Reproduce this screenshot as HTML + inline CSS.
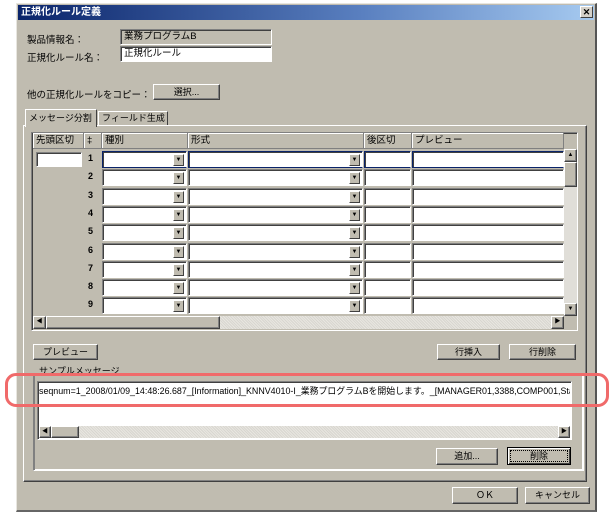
<!DOCTYPE html>
<html><head><meta charset="utf-8"><style>
*{margin:0;padding:0;box-sizing:border-box}
body{width:612px;height:514px;background:#fff;position:relative;overflow:hidden;font-family:"Liberation Sans","Noto Sans CJK JP",sans-serif;font-size:9.5px;color:#000}
.a{position:absolute;white-space:nowrap}
.win{left:16px;top:3px;width:581px;height:509px;background:#c0bcb0;border-left:1px solid #e8e6e0;border-top:1px solid #e8e6e0;border-right:2px solid #555;border-bottom:2px solid #666}
.title{left:18px;top:5px;width:576px;height:15px;background:linear-gradient(90deg,#0a246a,#5a80c0 60%,#a6caf0);color:#fff;font-weight:bold;font-size:10px;line-height:15px;padding-left:3px}
.xb{left:580px;top:6px;width:13px;height:12px;background:#d4d0c8;border:1px solid;border-color:#fff #404040 #404040 #fff;font-size:9px;line-height:10px;text-align:center;font-weight:bold}
.sunk{border:1px solid;border-color:#808080 #fff #fff #808080;box-shadow:inset 1px 1px 0 #404040}
.btn{background:#c0bcb0;border:1px solid;border-color:#fff #404040 #404040 #fff;box-shadow:inset -1px -1px 0 #808080;text-align:center;font-size:9px;line-height:14px}
.wh{background:#fff}
.hd{background:#c0bcb0;border-right:1px solid #808080;border-bottom:1px solid #808080;box-shadow:inset 1px 1px 0 #fff;padding-left:3px;line-height:15px;font-size:9.5px}
.dd{width:11px;height:12px;background:#c0bcb0;border:1px solid;border-color:#fff #404040 #404040 #fff;font-size:6px;text-align:center;line-height:10px}
.hatch{background:repeating-linear-gradient(45deg,#d8d6d0 0 1px,#e8e6e0 1px 2px)}
</style></head><body>
<div class="a win"></div>
<div class="a title">正規化ルール定義</div>
<div class="a xb">✕</div>

<div class="a" style="left:27px;top:32px">製品情報名：</div>
<div class="a sunk" style="left:120px;top:29px;width:152px;height:16px;background:#c0bcb0;padding-left:3px;line-height:13px">業務プログラムB</div>
<div class="a" style="left:27px;top:50px">正規化ルール名：</div>
<div class="a sunk wh" style="left:120px;top:46px;width:152px;height:16px;padding-left:3px;line-height:13px">正規化ルール</div>
<div class="a" style="left:27px;top:87px">他の正規化ルールをコピー：</div>
<div class="a btn" style="left:153px;top:84px;width:67px;height:16px">選択...</div>

<div class="a" style="left:23px;top:125px;width:564px;height:357px;border:1px solid;border-color:#fff #404040 #404040 #fff;box-shadow:inset -1px -1px 0 #808080"></div>
<div class="a" style="left:25px;top:109px;width:72px;height:18px;background:#c0bcb0;border:1px solid;border-bottom:none;border-color:#fff #404040 #404040 #fff;line-height:16px;padding-left:3px;font-size:9px;overflow:hidden">メッセージ分割</div>
<div class="a" style="left:98px;top:111px;width:70px;height:14px;border:1px solid;border-bottom:none;border-color:#fff #404040 #404040 #fff;line-height:13px;padding-left:3px;font-size:9px;overflow:hidden">フィールド生成</div>

<div class="a sunk" style="left:31px;top:132px;width:547px;height:199px;background:#c0bcb0"></div>
<div class="a hd" style="left:33px;top:133px;width:51px;height:16px">先頭区切</div>
<div class="a hd" style="left:84px;top:133px;width:18px;height:16px">‡</div>
<div class="a hd" style="left:102px;top:133px;width:86px;height:16px">種別</div>
<div class="a hd" style="left:188px;top:133px;width:176px;height:16px">形式</div>
<div class="a hd" style="left:364px;top:133px;width:48px;height:16px">後区切</div>
<div class="a hd" style="left:412px;top:133px;width:152px;height:16px">プレビュー</div>
<div class="a sunk wh" style="left:36px;top:152px;width:46px;height:15px"></div>
<div id="rows"></div>
<div class="a" style="left:564px;top:149px;width:13px;height:167px;background:#e0ded8"></div>
<div class="a btn" style="left:564px;top:149px;width:13px;height:13px;font-size:6px;line-height:11px">▲</div>
<div class="a btn" style="left:564px;top:162px;width:13px;height:25px"></div>
<div class="a btn" style="left:564px;top:303px;width:13px;height:13px;font-size:6px;line-height:11px">▼</div>
<div class="a hatch" style="left:33px;top:316px;width:531px;height:13px"></div>
<div class="a btn" style="left:33px;top:316px;width:13px;height:13px;font-size:6px;line-height:11px">◀</div>
<div class="a btn" style="left:46px;top:316px;width:174px;height:13px"></div>
<div class="a btn" style="left:551px;top:316px;width:13px;height:13px;font-size:6px;line-height:11px">▶</div>

<div class="a btn" style="left:33px;top:344px;width:65px;height:16px">プレビュー</div>
<div class="a btn" style="left:437px;top:344px;width:63px;height:16px">行挿入</div>
<div class="a btn" style="left:509px;top:344px;width:67px;height:16px">行削除</div>

<div class="a" style="left:33px;top:373px;width:551px;height:98px;border:1px solid;border-color:#808080 #fff #fff #808080;box-shadow:1px 1px 0 #808080 inset, -1px -1px 0 #fff inset"></div>
<div class="a" style="left:37px;top:364px;background:#c0bcb0;padding:0 2px;font-size:9px">サンプルメッセージ</div>
<div class="a sunk wh" style="left:37px;top:381px;width:535px;height:59px;overflow:hidden"></div>
<div class="a" style="left:39px;top:384px;width:531px;overflow:hidden;font-size:8.9px">seqnum=1_2008/01/09_14:48:26.687_[Information]_KNNV4010-I_業務プログラムBを開始します。_[MANAGER01,3388,COMP001,Start</div>
<div class="a hatch" style="left:39px;top:426px;width:531px;height:12px"></div>
<div class="a btn" style="left:39px;top:426px;width:12px;height:12px;font-size:6px;line-height:10px">◀</div>
<div class="a btn" style="left:51px;top:426px;width:28px;height:12px"></div>
<div class="a btn" style="left:558px;top:426px;width:12px;height:12px;font-size:6px;line-height:10px">▶</div>
<div class="a btn" style="left:436px;top:448px;width:62px;height:17px">追加...</div>
<div class="a btn" style="left:507px;top:447px;width:64px;height:18px;border-color:#000;box-shadow:inset 1px 1px 0 #fff,inset -1px -1px 0 #404040"><div style="margin:2px;border:1px dotted #000;line-height:10px">削除</div></div>

<div class="a btn" style="left:452px;top:487px;width:66px;height:17px">ＯＫ</div>
<div class="a btn" style="left:525px;top:487px;width:65px;height:17px">キャンセル</div>

<div class="a" style="left:5px;top:373px;width:604px;height:34px;border:3px solid #f06a6a;border-radius:11px"></div>

<script>
var h='';for(var i=0;i<9;i++){var y=151+i*18.3;
h+='<div class="a" style="left:88px;top:'+(y+2)+'px;font-size:9px;font-weight:bold">'+(i+1)+'</div>';
[[102,85,1],[188,175,1],[364,47,0],[412,152,0]].forEach(function(c){
h+='<div class="a sunk wh" style="left:'+c[0]+'px;top:'+y+'px;width:'+c[1]+'px;height:17px;'+(i==0?'border-color:#0a246a #fff #0a246a #0a246a;':'')+'"></div>';
if(c[2])h+='<div class="a dd" style="left:'+(c[0]+c[1]-14)+'px;top:'+(y+3)+'px">▼</div>';});}
document.getElementById('rows').innerHTML=h;
</script>
</body></html>
